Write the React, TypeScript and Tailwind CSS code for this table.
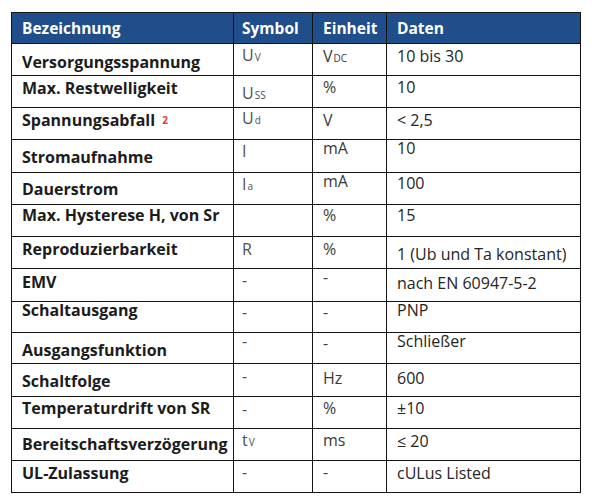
type Cell = { text: React.ReactNode; pt: number }

// row height (incl. bottom border) and per-cell top padding
const rows: { h: number; cells: Cell[] }[] = [
  { h: 32, cells: [{ text: "Versorgungsspannung", pt: 10 }, { text: <>U<Sub>V</Sub></>, pt: 3 }, { text: <>V<Sub>DC</Sub></>, pt: 4 }, { text: "10 bis 30", pt: 4 }] },
  { h: 32, cells: [{ text: "Max. Restwelligkeit", pt: 4 }, { text: <>U<Sub>SS</Sub></>, pt: 9 }, { text: "%", pt: 3 }, { text: "10", pt: 3 }] },
  { h: 32, cells: [{ text: <>Spannungsabfall <Note /></>, pt: 4 }, { text: <>U<Sub>d</Sub></>, pt: 2 }, { text: "V", pt: 4 }, { text: "< 2,5", pt: 4 }] },
  { h: 33, cells: [{ text: "Stromaufnahme", pt: 9 }, { text: "I", pt: 3 }, { text: "mA", pt: 0 }, { text: "10", pt: 0 }] },
  { h: 32, cells: [{ text: "Dauerstrom", pt: 8 }, { text: <>I<Sub>a</Sub></>, pt: 3 }, { text: "mA", pt: 0 }, { text: "100", pt: 2 }] },
  { h: 32, cells: [{ text: "Max. Hysterese H, von Sr", pt: 2 }, { text: "", pt: 2 }, { text: "%", pt: 2 }, { text: "15", pt: 2 }] },
  { h: 32, cells: [{ text: "Reproduzierbarkeit", pt: 4 }, { text: "R", pt: 4 }, { text: "%", pt: 4 }, { text: "1 (Ub und Ta konstant)", pt: 9 }] },
  { h: 33, cells: [{ text: "EMV", pt: 5 }, { text: "-", pt: 3 }, { text: "-", pt: 0 }, { text: "nach EN 60947-5-2", pt: 6 }] },
  { h: 31, cells: [{ text: "Schaltausgang", pt: 0 }, { text: "-", pt: 2 }, { text: "-", pt: 2 }, { text: "PNP", pt: 0 }] },
  { h: 31, cells: [{ text: "Ausgangsfunktion", pt: 9 }, { text: "-", pt: 0 }, { text: "-", pt: 2 }, { text: "Schließer", pt: 0 }] },
  { h: 33, cells: [{ text: "Schaltfolge", pt: 9 }, { text: "-", pt: 4 }, { text: "Hz", pt: 6 }, { text: "600", pt: 6 }] },
  { h: 32, cells: [{ text: "Temperaturdrift von SR", pt: 3 }, { text: "-", pt: 4 }, { text: "%", pt: 3 }, { text: "±10", pt: 3 }] },
  { h: 32, cells: [{ text: "Bereitschaftsverzögerung", pt: 7 }, { text: <>t<Sub>V</Sub></>, pt: 3 }, { text: "ms", pt: 3 }, { text: "≤ 20", pt: 4 }] },
  { h: 32, cells: [{ text: "UL-Zulassung", pt: 4 }, { text: "-", pt: 3 }, { text: "-", pt: 3 }, { text: "cULus Listed", pt: 4 }] },
]

const widths = ["w-[222px]", "w-[79px]", "w-[74px]", "w-[194px]"]
const padX = ["pl-[10px]", "pl-[8px]", "pl-[10px]", "pl-[10px]"]
const tone = [
  "font-bold text-[#1c1c1c]",
  "text-[#505050]",
  "text-[#3a3a3a]",
  "text-[#252525]",
]

function Sub({ children }: { children: React.ReactNode }) {
  return <span className="text-[10px] ml-[1px]">{children}</span>
}

function Note() {
  return (
    <sup className="ml-[3px] text-[10px] font-bold text-[#d9413a] relative -top-[2px]">2</sup>
  )
}

const heads = ["Bezeichnung", "Symbol", "Einheit", "Daten"]

export default function App() {
  return (
    <div
      className="w-[592px] h-[503px] bg-white pt-[12px] pl-[11px]"
      style={{ fontFamily: '"Open Sans", "Noto Sans", sans-serif' }}
    >
      <div className="w-[570px] border-l border-t border-[#141414]">
        {/* header */}
        <div className="flex h-[31px] bg-[#1f4e8b]">
          {heads.map((h, i) => (
            <div
              key={h}
              className={`${widths[i]} ${padX[i]} shrink-0 border-r border-b border-[#141414] pt-[7px] text-[15.5px] leading-[16px] font-bold text-white`}
            >
              {h}
            </div>
          ))}
        </div>

        {rows.map((row, r) => (
          <div key={r} className="flex" style={{ height: row.h }}>
            {row.cells.map((c, i) => (
              <div
                key={i}
                className={`${widths[i]} ${padX[i]} ${tone[i]} shrink-0 border-r border-b border-[#141414] text-[16px] leading-[16px] whitespace-nowrap`}
                style={{ paddingTop: c.pt }}
              >
                {c.text}
              </div>
            ))}
          </div>
        ))}
      </div>
    </div>
  )
}
